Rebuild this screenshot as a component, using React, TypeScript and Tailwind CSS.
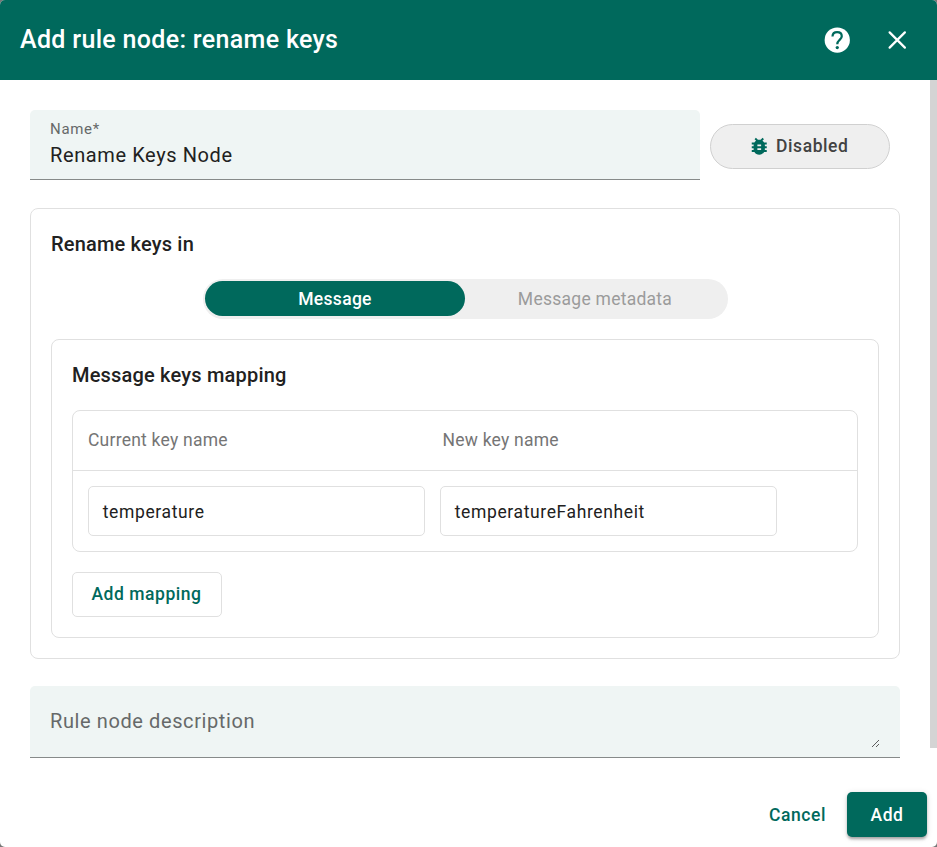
const panel = "rounded-lg border border-[#e0e0e0]";

const BUG =
  "M14 12h-4v-2h4m0 6h-4v-2h4m6-6h-2.81a5.985 5.985 0 0 0-1.82-1.96L17 4.41 15.59 3l-2.17 2.17a6.002 6.002 0 0 0-2.83 0L8.41 3 7 4.41l1.62 1.63C7.88 6.55 7.26 7.22 6.81 8H4v2h2.09c-.05.33-.09.66-.09 1v1H4v2h2v1c0 .34.04.67.09 1H4v2h2.81c1.04 1.79 2.97 3 5.19 3s4.15-1.21 5.19-3H20v-2h-2.09c.05-.33.09-.66.09-1v-1h2v-2h-2v-1c0-.34-.04-.67-.09-1H20V8z";

function HelpIcon() {
  return (
    <svg viewBox="0 0 24 24" fill="none" className="size-[30px]" aria-hidden="true">
      <circle cx="12.2" cy="12" r="10.1" fill="currentColor" />
      <path
        d="M8.4 9.2C8.5 6.9 10 5.7 12.1 5.7c2.2 0 3.7 1.3 3.7 3.2 0 1.5-.9 2.2-1.8 3.1-1 .9-1.8 1.6-1.8 3.4"
        stroke="#00695c"
        strokeWidth="1.8"
      />
      <circle cx="12.2" cy="18" r="1.3" fill="#00695c" />
    </svg>
  );
}

function CloseIcon() {
  return (
    <svg
      viewBox="0 0 24 24"
      fill="none"
      stroke="currentColor"
      strokeWidth="1.8"
      strokeLinecap="round"
      className="size-[30px]"
      aria-hidden="true"
    >
      <path d="M6.1 5.9l12.2 12.2M18.3 5.9L6.1 18.1" />
    </svg>
  );
}

function Header() {
  return (
    <header className="flex h-20 shrink-0 items-center bg-[#00695c] pl-5 pr-[25px] text-white">
      <h1 className="flex-1 text-[25px] leading-8 font-medium tracking-[0.32px] whitespace-nowrap">
        Add rule node: rename keys
      </h1>
      <button className="mr-[30px]" aria-label="Help">
        <HelpIcon />
      </button>
      <button aria-label="Close">
        <CloseIcon />
      </button>
    </header>
  );
}

function KeysMapping() {
  return (
    <section className={`${panel} mt-5 h-[299px] px-5 pt-5`}>
      <h3 className="text-xl leading-[30px] font-medium tracking-[0.19px]">Message keys mapping</h3>
      <div className={`${panel} mt-5 h-[142px]`}>
        <div className="flex h-[60px] items-center border-b border-[#e0e0e0] pl-[15px] text-[17.5px] tracking-[0.23px] text-[#757575]">
          <span className="w-[354.5px]">Current key name</span>
          <span>New key name</span>
        </div>
        <div className="flex gap-[15px] p-[15px] text-[17.5px] tracking-[0.62px]">
          <div className="flex h-[50px] w-[337px] items-center rounded-[5px] border border-[#e0e0e0] px-[13.75px] pt-0.5">
            temperature
          </div>
          <div className="flex h-[50px] w-[337px] items-center rounded-[5px] border border-[#e0e0e0] px-[13.75px] pt-0.5">
            temperatureFahrenheit
          </div>
        </div>
      </div>
      <button className="mt-5 h-[45px] w-[150px] rounded-[5px] border border-[#e0e0e0] pr-px text-[17.5px] font-medium tracking-[0.55px] text-[#00695c]">
        Add mapping
      </button>
    </section>
  );
}

export default function App() {
  return (
    <div className="h-[847px] w-[937px] overflow-hidden bg-[#777] font-[Roboto,sans-serif] text-[#212121]">
      <div className="flex h-full flex-col overflow-hidden rounded-[5px] bg-white">
        <Header />
        <div className="flex h-[698px] shrink-0">
          <main className="w-[930px] px-[30px] pt-[30px]">
            <div className="flex items-center gap-2.5">
              <div className="h-[70px] w-[670px] rounded-t-[5px] border-b border-[#868a89] bg-[#eff5f4] px-5 pt-2.5">
                <div className="text-[15px] leading-[18px] tracking-[0.7px] text-[#666969]">Name*</div>
                <div className="mt-1 text-xl leading-[26px] tracking-[0.6px]">Rename Keys Node</div>
              </div>
              <button className="mt-[3px] flex h-[45px] w-[180px] items-center justify-center gap-[6px] rounded-full border border-[#d0d0d0] bg-[#efefef] pr-[4px] text-[17.5px] font-medium tracking-[0.55px] text-[#424242]">
                <svg
                  viewBox="0 0 24 24"
                  fill="currentColor"
                  className="mb-[1.5px] size-[22.5px] text-[#00695c]"
                  aria-hidden="true"
                >
                  <path d={BUG} />
                </svg>
                Disabled
              </button>
            </div>

            <section className={`${panel} mt-7 h-[451px] w-[870px] px-5 pt-5`}>
              <h2 className="text-xl leading-[30px] font-medium tracking-[0.18px]">Rename keys in</h2>
              <div className="mt-5 ml-[152px] flex h-10 w-[525px] items-start rounded-full bg-[#efefef] pt-0.5 pl-0.5 text-[17.5px]">
                <div className="flex h-[35px] w-[260px] items-center justify-center rounded-full bg-[#00695c] pt-px font-medium tracking-[0.31px] text-white">
                  Message
                </div>
                <div className="flex h-[35px] w-[260px] items-center justify-center pt-px tracking-[0.26px] text-[#9b9b9b]">
                  Message metadata
                </div>
              </div>
              <KeysMapping />
            </section>

            <div className="mt-[27px] flex h-[72px] w-[870px] justify-between rounded-t-[5px] border-b border-[#868a89] bg-[#eff5f4] px-5">
              <span className="pt-[22px] text-xl leading-[26px] tracking-[0.6px] text-[#666969]">
                Rule node description
              </span>
              <svg
                className="mb-[10px] h-[7px] w-2 self-end"
                viewBox="0 0 8 7"
                stroke="#4c4c4c"
                strokeWidth="0.9"
                aria-hidden="true"
              >
                <path d="M0 7l7-7M4 7l3-3" />
              </svg>
            </div>
          </main>
          <div className="h-[668px] w-[7px] bg-[#d4d4d4]" />
        </div>
        <footer className="flex justify-end gap-[21px] pt-3.5 pr-2.5 text-[17.5px] font-medium tracking-[0.57px]">
          <button className="h-[45px] pt-px text-[#00695c]">Cancel</button>
          <button className="h-[45px] w-20 rounded-[5px] bg-[#00695c] pt-px text-white shadow-[0_3px_3px_-1px_rgba(0,0,0,0.2),0_2px_3px_rgba(0,0,0,0.14),0_1px_6px_rgba(0,0,0,0.12)]">
            Add
          </button>
        </footer>
      </div>
    </div>
  );
}
